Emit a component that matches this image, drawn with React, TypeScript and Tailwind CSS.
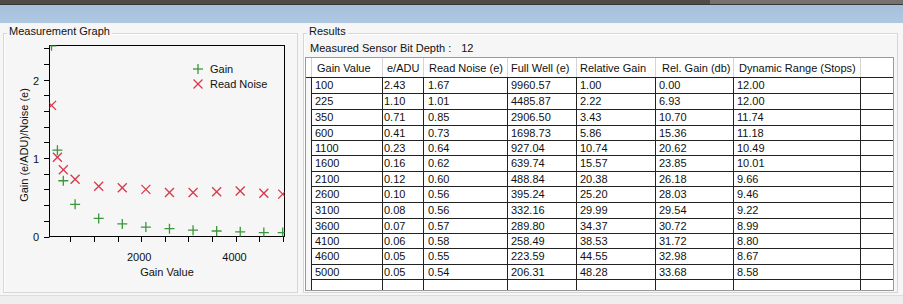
import React from "react";

const rows: string[][] = [
  ["100", "2.43", "1.67", "9960.57", "1.00", "0.00", "12.00"],
  ["225", "1.10", "1.01", "4485.87", "2.22", "6.93", "12.00"],
  ["350", "0.71", "0.85", "2906.50", "3.43", "10.70", "11.74"],
  ["600", "0.41", "0.73", "1698.73", "5.86", "15.36", "11.18"],
  ["1100", "0.23", "0.64", "927.04", "10.74", "20.62", "10.49"],
  ["1600", "0.16", "0.62", "639.74", "15.57", "23.85", "10.01"],
  ["2100", "0.12", "0.60", "488.84", "20.38", "26.18", "9.66"],
  ["2600", "0.10", "0.56", "395.24", "25.20", "28.03", "9.46"],
  ["3100", "0.08", "0.56", "332.16", "29.99", "29.54", "9.22"],
  ["3600", "0.07", "0.57", "289.80", "34.37", "30.72", "8.99"],
  ["4100", "0.06", "0.58", "258.49", "38.53", "31.72", "8.80"],
  ["4600", "0.05", "0.55", "223.59", "44.55", "32.98", "8.67"],
  ["5000", "0.05", "0.54", "206.31", "48.28", "33.68", "8.58"],
];

const tall = [true, true, true, false, false, true, false, true, true, false, false, true, false];

const cols = [
  { w: "w-[71px]", hp: "pl-[5px]", dp: "pl-[3px]", label: "Gain Value" },
  { w: "w-[41px]", hp: "pl-[4px]", dp: "pl-[1px]", label: "e/ADU" },
  { w: "w-[84px]", hp: "pl-[5px]", dp: "pl-[4px]", label: "Read Noise (e)" },
  { w: "w-[69px]", hp: "pl-[3px]", dp: "pl-[3px]", label: "Full Well (e)" },
  { w: "w-[79px]", hp: "pl-[3px]", dp: "pl-[3px]", label: "Relative Gain" },
  { w: "w-[78px]", hp: "pl-[6px]", dp: "pl-[3px]", label: "Rel. Gain (db)" },
  { w: "w-[127px]", hp: "pl-[5px]", dp: "pl-[3px]", label: "Dynamic Range (Stops)" },
];

const pts = rows.map((r) => ({ g: Number(r[0]), gain: Number(r[1]), noise: Number(r[2]) }));
const xOf = (g: number) => 46.8 + 0.04718 * g;
const yOf = (v: number) => 236.5 - 78.5 * v;
const GREEN = "#3a963a";
const RED = "#d63a4c";

function Plus({ x, y }: { x: number; y: number }) {
  return (
    <g stroke={GREEN} strokeWidth={1.3}>
      <line x1={x - 5} y1={y} x2={x + 5} y2={y} />
      <line x1={x} y1={y - 5} x2={x} y2={y + 5} />
    </g>
  );
}

function Cross({ x, y }: { x: number; y: number }) {
  return (
    <g stroke={RED} strokeWidth={1.3}>
      <line x1={x - 4.5} y1={y - 4.5} x2={x + 4.5} y2={y + 4.5} />
      <line x1={x - 4.5} y1={y + 4.5} x2={x + 4.5} y2={y - 4.5} />
    </g>
  );
}

function Chart() {
  const yTicks = Array.from({ length: 13 }, (_, i) => i * 0.2);
  const xTicks = Array.from({ length: 10 }, (_, i) => (i + 1) * 500);
  return (
    <svg
      width={293}
      height={258}
      viewBox="4 34 293 258"
      className="block font-['Liberation_Sans',Arial,sans-serif]"
    >
      <defs>
        <clipPath id="plotclip">
          <rect x={49.5} y={45.5} width={235} height={191} />
        </clipPath>
      </defs>
      <rect x={49.5} y={45.5} width={235} height={191} fill="none" stroke="#000" strokeWidth={1} />
      {yTicks.map((v) => {
        const y = Math.round(yOf(v)) + 0.5;
        return <line key={v} x1={44} y1={y} x2={49.5} y2={y} stroke="#000" strokeWidth={1} />;
      })}
      {xTicks.map((g) => {
        const x = Math.round(xOf(g)) + 0.5;
        return <line key={g} x1={x} y1={236.5} x2={x} y2={242} stroke="#000" strokeWidth={1} />;
      })}
      <g fontSize={11} fill="#111">
        <text x={39} y={85} textAnchor="end">2</text>
        <text x={39} y={163} textAnchor="end">1</text>
        <text x={39} y={241} textAnchor="end">0</text>
        <text x={xOf(2000) - 2} y={261} textAnchor="middle">2000</text>
        <text x={xOf(4000) - 1} y={261} textAnchor="middle">4000</text>
        <text x={167} y={276} textAnchor="middle">Gain Value</text>
        <text transform="translate(28,145) rotate(-90)" textAnchor="middle">Gain (e/ADU)/Noise (e)</text>
        <text x={210} y={73}>Gain</text>
        <text x={210} y={88}>Read Noise</text>
      </g>
      <Plus x={198} y={69} />
      <Cross x={198} y={84} />
      <g clipPath="url(#plotclip)">
        {pts.map((p) => (
          <Cross key={"n" + p.g} x={xOf(p.g)} y={yOf(p.noise)} />
        ))}
        {pts.map((p) => (
          <Plus key={"g" + p.g} x={xOf(p.g)} y={yOf(p.gain)} />
        ))}
      </g>
    </svg>
  );
}

function Grid() {
  return (
    <div className="ml-[1px] mt-[2px] w-[589px] h-[234px] border border-[#9a9a9a] bg-white overflow-hidden flex flex-col text-[#111]">
      <div className="flex h-[20px] shrink-0 border-b border-[#222]">
        <div className="w-[6px] shrink-0 border-r border-[#d0d0d0] bg-white" />
        {cols.map((c) => (
          <div
            key={c.label}
            className={`${c.w} ${c.hp} shrink-0 border-r border-[#d5d5d5] pt-[4px] leading-[13px] whitespace-nowrap overflow-hidden`}
          >
            {c.label}
          </div>
        ))}
        <div className="flex-1" />
      </div>
      {rows.map((r, i) => (
        <div key={r[0]} className={`flex shrink-0 ${tall[i] ? "h-[16px]" : "h-[15px]"}`}>
          <div className="w-[6px] shrink-0 border-r border-[#222] bg-[#f7f7f7]" />
          <div className="flex flex-1 border-b border-[#222]">
            {cols.map((c, j) => (
              <div
                key={j}
                className={`${c.w} ${c.dp} shrink-0 border-r border-[#222] flex items-center leading-[13px] whitespace-nowrap overflow-hidden`}
              >
                {r[j]}
              </div>
            ))}
            <div className="flex-1" />
          </div>
        </div>
      ))}
      <div className="flex shrink-0 h-[16px]">
        <div className="w-[6px] shrink-0 border-r border-[#222] bg-[#f7f7f7]" />
        {cols.map((c, j) => (
          <div key={j} className={`${c.w} shrink-0 border-r border-[#222]`} />
        ))}
        <div className="flex-1" />
      </div>
    </div>
  );
}

export default function App() {
  return (
    <div className="w-[903px] h-[304px] overflow-hidden bg-[#eeeeee] flex flex-col font-['Liberation_Sans',Arial,sans-serif] text-[11px] text-[#111]">
      <div className="h-[5px] shrink-0 flex border-b border-[#3a3836]">
        <div className="w-[710px] bg-[#4f4b47]" />
        <div className="flex-1 bg-[#76726f]" />
      </div>
      <div className="h-[18px] shrink-0 bg-gradient-to-b from-[#a6c0dc] to-[#afc8e2]" />
      <div className="h-[273px] shrink-0 bg-[#f6f6f6] border-b border-[#dcdcdc] flex gap-[5px] pl-[3px] pt-[10px]">
        <div className="relative w-[295px] h-[260px] border border-[#d6d6d6] shadow-[inset_1px_1px_0_#ffffff]">
          <div className="absolute left-[3px] top-[-9px] px-[2px] leading-[13px] bg-[#f6f6f6] whitespace-nowrap">
            Measurement Graph
          </div>
          <Chart />
        </div>
        <div className="relative w-[595px] h-[260px] border border-[#d6d6d6] shadow-[inset_1px_1px_0_#ffffff] flex flex-col">
          <div className="absolute left-[3px] top-[-9px] px-[2px] leading-[13px] bg-[#f6f6f6] whitespace-nowrap">
            Results
          </div>
          <div className="pl-[6px] pt-[8px] leading-[13px] flex whitespace-nowrap">
            <span>Measured Sensor Bit Depth :</span>
            <span className="ml-[10px]">12</span>
          </div>
          <Grid />
        </div>
      </div>
    </div>
  );
}
